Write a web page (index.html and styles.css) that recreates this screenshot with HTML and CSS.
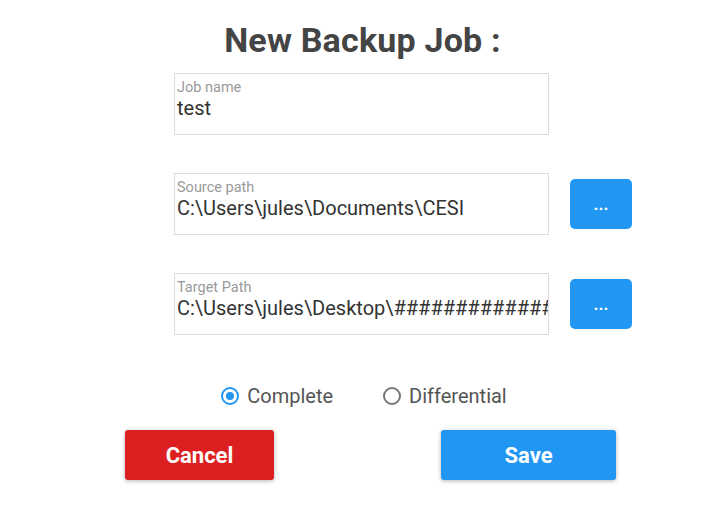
FILE: index.html
```html
<!DOCTYPE html>
<html>
<head>
<meta charset="utf-8">
<link rel="stylesheet" href="styles.css">
</head>
<body>
<div class="page">
  <h1 class="title">New Backup Job :</h1>
  <div class="fields">
    <div class="field">
      <div class="box">
        <span class="label">Job name</span>
        <span class="value">test</span>
      </div>
    </div>
    <div class="field">
      <div class="box">
        <span class="label">Source path</span>
        <span class="value">C:\Users\jules\Documents\CESI</span>
      </div>
      <button class="browse">...</button>
    </div>
    <div class="field">
      <div class="box">
        <span class="label">Target Path</span>
        <span class="value">C:\Users\jules\Desktop\#################</span>
      </div>
      <button class="browse">...</button>
    </div>
  </div>
  <div class="radios">
    <label class="radio"><span class="dot checked"></span>Complete</label>
    <label class="radio"><span class="dot"></span>Differential</label>
  </div>
  <div class="actions">
    <button class="btn cancel">Cancel</button>
    <button class="btn save">Save</button>
  </div>
</div>
</body>
</html>
```
FILE: styles.css
```css
html, body {
  margin: 0;
  padding: 0;
  background: #ffffff;
}
body {
  font-family: Roboto, "Liberation Sans", sans-serif;
  width: 725px;
  height: 527px;
  overflow: hidden;
}
.page {
  display: flex;
  flex-direction: column;
  align-items: stretch;
}
.title {
  margin: 0;
  padding-top: 21px;
  padding-left: 0;
  height: 73px;
  box-sizing: border-box;
  text-align: center;
  font-size: 34px;
  letter-spacing: 0.2px;
  font-weight: 700;
  color: #444444;
  line-height: 38px;
}
.fields {
  display: flex;
  flex-direction: column;
  gap: 38px;
}
.field {
  display: grid;
  grid-template-columns: 174px 375px 1fr;
  align-items: center;
}
.box {
  grid-column: 2;
  height: 62px;
  box-sizing: border-box;
  border: 1px solid #dcdcdc;
  padding: 6px 2px 0 2px;
  display: flex;
  flex-direction: column;
  overflow: hidden;
  white-space: nowrap;
}
.label {
  font-size: 14.5px;
  line-height: 16px;
  color: #9a9a9a;
}
.value {
  font-size: 20px;
  line-height: 24px;
  color: #333333;
}
.browse {
  grid-column: 3;
  justify-self: start;
  margin-left: 21px;
  width: 62px;
  height: 50px;
  border: none;
  border-radius: 5px;
  background: #2196f3;
  color: #ffffff;
  font-family: Roboto, sans-serif;
  font-weight: 700;
  font-size: 17px;
  padding: 0;
}
.radios {
  display: flex;
  justify-content: center;
  gap: 50px;
  margin-top: 50px;
  padding-left: 3px;
}
.radio {
  display: flex;
  align-items: center;
  gap: 8px;
  font-size: 20px;
  color: #555555;
  line-height: 22px;
}
.dot {
  width: 18px;
  height: 18px;
  box-sizing: border-box;
  border: 2px solid #757575;
  border-radius: 50%;
  display: inline-block;
  position: relative;
}
.dot.checked {
  border-color: #2196f3;
}
.dot.checked::after {
  content: "";
  position: absolute;
  left: 3px;
  top: 3px;
  width: 8px;
  height: 8px;
  border-radius: 50%;
  background: #2196f3;
}
.actions {
  display: flex;
  padding-left: 125px;
  gap: 167px;
  margin-top: 23px;
}
.btn {
  height: 50px;
  border: none;
  border-radius: 3px;
  color: #ffffff;
  font-family: Roboto, sans-serif;
  font-weight: 700;
  font-size: 22px;
  box-shadow: 0 1px 4px rgba(0, 0, 0, 0.3);
  padding: 0;
}
.cancel {
  width: 149px;
  background: #dc1f21;
}
.save {
  width: 175px;
  background: #2196f3;
}
```
